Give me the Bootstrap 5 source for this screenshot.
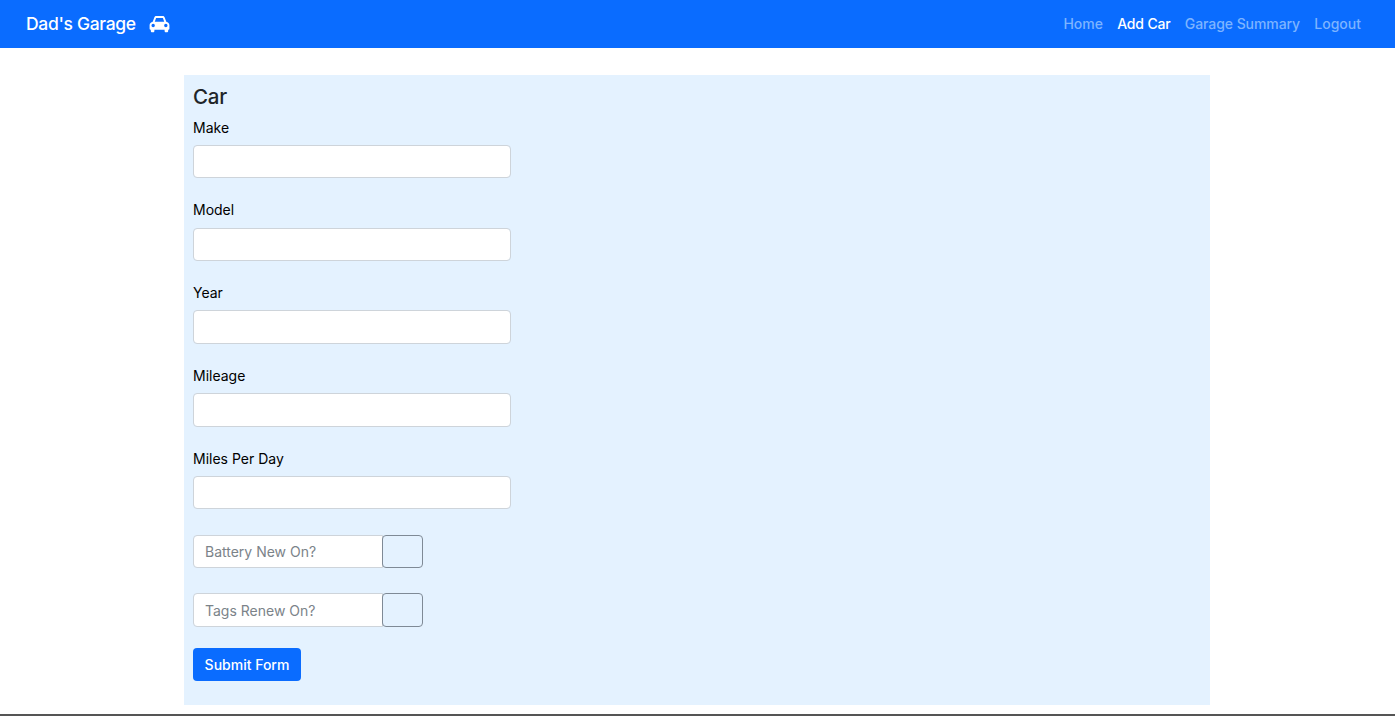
<!DOCTYPE html>
<html lang="en">
<head>
<meta charset="utf-8">
<title>Dad's Garage</title>
<link href="https://cdn.jsdelivr.net/npm/bootstrap@5.3.0/dist/css/bootstrap.min.css" rel="stylesheet">
<style>
html, body { height: 716px; overflow: hidden; }
body { font-family: Inter, "Liberation Sans", sans-serif; font-size: 14px; color: #000; display: flex; flex-direction: column; }
.top-bar { background: #0a6cff; height: 48px; padding: 0 34px 0 26px; flex: none; }
.top-bar .navbar-brand { font-size: 17.5px; font-weight: 500; color: #fff; padding: 0; margin: 0; letter-spacing: -.33px; }
.top-bar .nav-link { color: #7db4ff; font-size: 14px; font-weight: 500; padding: 0; }
.top-bar .nav-link.active { color: #fff; letter-spacing: -.15px; }
.nav-wrap { gap: 14.2px; margin-bottom: 2px; }
.nav-wrap .nav-link:nth-child(3) { letter-spacing: -.07px; }
.car-ico { width: 21px; height: 17px; margin-left: 13px; fill: #fff; }
.page-main { flex: 1; }
.panel-box { width: 1026px; height: 630px; margin: 27px auto 0 184px; background: #e4f2ff; padding: 9px; }
.panel-box h1 { font-size: 20.5px; font-weight: 500; line-height: 26px; margin: 0 0 8.75px; color: #212529; letter-spacing: -.2px; }
.form-w { width: 318px; }
.field-g { margin-bottom: 23px; }
.field-g label { display: block; line-height: 17px; margin-bottom: 9.25px; }
.field-g .form-control { height: 33.45px; padding: 4px 12px; font-size: 14px; border-color: #ced4da; border-radius: 4px; }
.date-g { margin-bottom: 25px; }
.date-first { margin-top: 25.75px; }
.date-last { margin-bottom: 21px; }
.field-g:nth-child(5) { margin-bottom: 0; }
.date-g .form-control { width: 190px; height: 33.4px; font-size: 14px; padding: 4px 11px; border-color: #ced4da; border-radius: 4px 0 0 4px; }
.date-g .form-control::placeholder { color: #7b8389; }
.cal-btn { width: 41px; height: 33.4px; margin-left: -1px; border: 1px solid #7f8a96; border-radius: 4px; background: transparent; padding: 0; }
.submit-b { background: #0a6cff; color: #fff; font-size: 14px; font-weight: 500; height: 33.4px; width: 108px; padding: 0; border-radius: 4px; border: 0; }
.foot-line { height: 2px; background: #555; flex: none; }
</style>
</head>
<body>
<nav class="navbar top-bar d-flex justify-content-between align-items-center flex-nowrap">
  <a class="navbar-brand d-flex align-items-center" href="#">Dad's Garage
    <svg class="car-ico" viewBox="0 0 22 18" aria-hidden="true"><path fill-rule="evenodd" d="M5.6 1.2C6 .5 6.7 0 7.6 0h6.8c.9 0 1.6.5 2 1.2L18.2 6c1.900.4 3.300 1.900 3.300 3.900v3.600c0 .6-.4 1-1 1h-.3v1.400c0 .8-.6 1.400-1.400 1.400h-1c-.8 0-1.400-.6-1.400-1.400v-1.400H5.600v1.400c0 .8-.6 1.400-1.400 1.400h-1c-.8 0-1.400-.6-1.400-1.400v-1.400h-.3c-.6 0-1-.4-1-1V9.900C.5 7.900 1.900 6.400 3.800 6L5.600 1.200zM7.800 2.200c-.3 0-.5.2-.6.4L6 6h10l-1.200-3.400c-.1-.2-.3-.4-.6-.4H7.800zM4.300 8.300a1.800 1.800 0 1 0 0 3.600 1.800 1.800 0 0 0 0-3.600zm13.400 0a1.800 1.800 0 1 0 0 3.600 1.800 1.800 0 0 0 0-3.600z"/></svg>
  </a>
  <div class="navbar-nav flex-row nav-wrap">
    <a class="nav-link" href="#">Home</a>
    <a class="nav-link active" href="#">Add Car</a>
    <a class="nav-link" href="#">Garage Summary</a>
    <a class="nav-link" href="#">Logout</a>
  </div>
</nav>
<main class="page-main">
  <div class="panel-box">
    <h1>Car</h1>
    <form class="form-w">
      <div class="field-g"><label for="f1">Make</label><input id="f1" class="form-control" type="text"></div>
      <div class="field-g"><label for="f2">Model</label><input id="f2" class="form-control" type="text"></div>
      <div class="field-g"><label for="f3">Year</label><input id="f3" class="form-control" type="text"></div>
      <div class="field-g"><label for="f4">Mileage</label><input id="f4" class="form-control" type="text"></div>
      <div class="field-g"><label for="f5">Miles Per Day</label><input id="f5" class="form-control" type="text"></div>
      <div class="date-g date-first d-flex"><input class="form-control" type="text" placeholder="Battery New On?"><button class="cal-btn" type="button" aria-label="Pick date"></button></div>
      <div class="date-g date-last d-flex"><input class="form-control" type="text" placeholder="Tags Renew On?"><button class="cal-btn" type="button" aria-label="Pick date"></button></div>
      <button class="btn submit-b" type="submit">Submit Form</button>
    </form>
  </div>
</main>
<div class="foot-line"></div>
<script src="https://cdn.jsdelivr.net/npm/bootstrap@5.3.0/dist/js/bootstrap.bundle.min.js"></script>
</body>
</html>
